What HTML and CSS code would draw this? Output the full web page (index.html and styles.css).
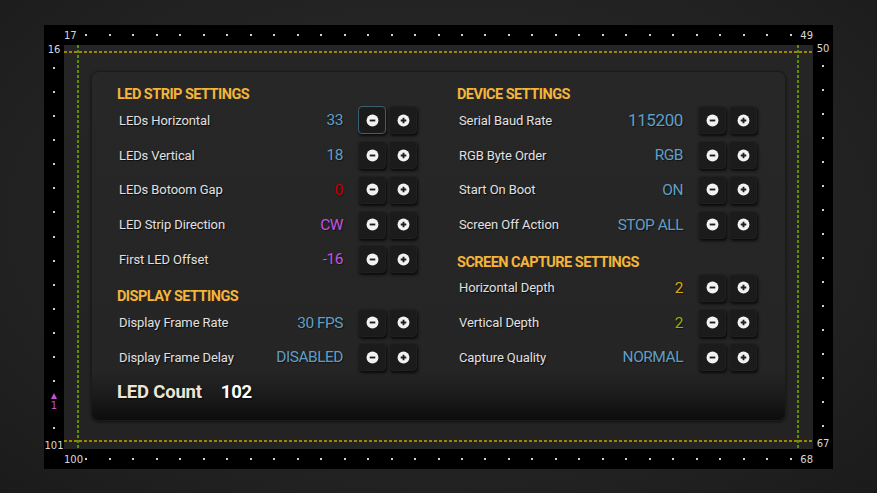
FILE: index.html
```html
<!DOCTYPE html>
<html>
<head>
<meta charset="utf-8">
<link rel="stylesheet" href="styles.css">
</head>
<body>
<div class="frame">
  <div class="corner"></div>
  <div class="strip strip-h strip-top">
    <span class="lab start">17</span>
    <i></i><i></i><i></i><i></i><i></i><i></i><i></i><i></i><i></i><i></i>
    <i></i><i></i><i></i><i></i><i></i><i></i><i></i><i></i><i></i><i></i>
    <i></i><i></i><i></i><i></i><i></i><i></i><i></i><i></i><i></i><i></i>
    <i></i>
    <span class="lab end">49</span>
  </div>
  <div class="corner"></div>

  <div class="strip strip-v strip-left">
    <span class="lab start">16</span>
    <i></i><i></i><i></i><i></i><i></i><i></i><i></i>
    <i></i><i></i><i></i><i></i><i></i><i></i><i></i>
    <span class="marker"><b class="tri"></b><span>1</span></span>
    <i></i>
    <span class="lab end">101</span>
  </div>

  <div class="canvas">
    <div class="guide guide-top"></div>
    <div class="guide guide-bottom"></div>
    <div class="guide guide-left"></div>
    <div class="guide guide-right"></div>
    <div class="panel">
      <div class="col">
        <h2 class="heading">LED STRIP SETTINGS</h2>
        <div class="row">
          <span class="label">LEDs Horizontal</span>
          <span class="value blue">33</span>
          <button class="btn focus"><svg viewBox="0 0 14 14"><circle cx="7" cy="7" r="6.4"/><path d="M4 7h6"/></svg></button>
          <button class="btn"><svg viewBox="0 0 14 14"><circle cx="7" cy="7" r="6.4"/><path d="M4 7h6M7 4v6"/></svg></button>
        </div>
        <div class="row">
          <span class="label">LEDs Vertical</span>
          <span class="value blue">18</span>
          <button class="btn"><svg viewBox="0 0 14 14"><circle cx="7" cy="7" r="6.4"/><path d="M4 7h6"/></svg></button>
          <button class="btn"><svg viewBox="0 0 14 14"><circle cx="7" cy="7" r="6.4"/><path d="M4 7h6M7 4v6"/></svg></button>
        </div>
        <div class="row">
          <span class="label">LEDs Botoom Gap</span>
          <span class="value red">0</span>
          <button class="btn"><svg viewBox="0 0 14 14"><circle cx="7" cy="7" r="6.4"/><path d="M4 7h6"/></svg></button>
          <button class="btn"><svg viewBox="0 0 14 14"><circle cx="7" cy="7" r="6.4"/><path d="M4 7h6M7 4v6"/></svg></button>
        </div>
        <div class="row">
          <span class="label">LED Strip Direction</span>
          <span class="value purple">CW</span>
          <button class="btn"><svg viewBox="0 0 14 14"><circle cx="7" cy="7" r="6.4"/><path d="M4 7h6"/></svg></button>
          <button class="btn"><svg viewBox="0 0 14 14"><circle cx="7" cy="7" r="6.4"/><path d="M4 7h6M7 4v6"/></svg></button>
        </div>
        <div class="row">
          <span class="label">First LED Offset</span>
          <span class="value purple">-16</span>
          <button class="btn"><svg viewBox="0 0 14 14"><circle cx="7" cy="7" r="6.4"/><path d="M4 7h6"/></svg></button>
          <button class="btn"><svg viewBox="0 0 14 14"><circle cx="7" cy="7" r="6.4"/><path d="M4 7h6M7 4v6"/></svg></button>
        </div>
        <h2 class="heading sub">DISPLAY SETTINGS</h2>
        <div class="row">
          <span class="label">Display Frame Rate</span>
          <span class="value blue">30 FPS</span>
          <button class="btn"><svg viewBox="0 0 14 14"><circle cx="7" cy="7" r="6.4"/><path d="M4 7h6"/></svg></button>
          <button class="btn"><svg viewBox="0 0 14 14"><circle cx="7" cy="7" r="6.4"/><path d="M4 7h6M7 4v6"/></svg></button>
        </div>
        <div class="row">
          <span class="label">Display Frame Delay</span>
          <span class="value blue">DISABLED</span>
          <button class="btn"><svg viewBox="0 0 14 14"><circle cx="7" cy="7" r="6.4"/><path d="M4 7h6"/></svg></button>
          <button class="btn"><svg viewBox="0 0 14 14"><circle cx="7" cy="7" r="6.4"/><path d="M4 7h6M7 4v6"/></svg></button>
        </div>
        <div class="count">
          <span class="count-label">LED Count</span>
          <span class="count-value">102</span>
        </div>
      </div>

      <div class="col">
        <h2 class="heading">DEVICE SETTINGS</h2>
        <div class="row">
          <span class="label">Serial Baud Rate</span>
          <span class="value blue big">115200</span>
          <button class="btn"><svg viewBox="0 0 14 14"><circle cx="7" cy="7" r="6.4"/><path d="M4 7h6"/></svg></button>
          <button class="btn"><svg viewBox="0 0 14 14"><circle cx="7" cy="7" r="6.4"/><path d="M4 7h6M7 4v6"/></svg></button>
        </div>
        <div class="row">
          <span class="label">RGB Byte Order</span>
          <span class="value blue">RGB</span>
          <button class="btn"><svg viewBox="0 0 14 14"><circle cx="7" cy="7" r="6.4"/><path d="M4 7h6"/></svg></button>
          <button class="btn"><svg viewBox="0 0 14 14"><circle cx="7" cy="7" r="6.4"/><path d="M4 7h6M7 4v6"/></svg></button>
        </div>
        <div class="row">
          <span class="label">Start On Boot</span>
          <span class="value blue">ON</span>
          <button class="btn"><svg viewBox="0 0 14 14"><circle cx="7" cy="7" r="6.4"/><path d="M4 7h6"/></svg></button>
          <button class="btn"><svg viewBox="0 0 14 14"><circle cx="7" cy="7" r="6.4"/><path d="M4 7h6M7 4v6"/></svg></button>
        </div>
        <div class="row">
          <span class="label">Screen Off Action</span>
          <span class="value blue">STOP ALL</span>
          <button class="btn"><svg viewBox="0 0 14 14"><circle cx="7" cy="7" r="6.4"/><path d="M4 7h6"/></svg></button>
          <button class="btn"><svg viewBox="0 0 14 14"><circle cx="7" cy="7" r="6.4"/><path d="M4 7h6M7 4v6"/></svg></button>
        </div>
        <h2 class="heading sub">SCREEN CAPTURE SETTINGS</h2>
        <div class="row">
          <span class="label">Horizontal Depth</span>
          <span class="value gold">2</span>
          <button class="btn"><svg viewBox="0 0 14 14"><circle cx="7" cy="7" r="6.4"/><path d="M4 7h6"/></svg></button>
          <button class="btn"><svg viewBox="0 0 14 14"><circle cx="7" cy="7" r="6.4"/><path d="M4 7h6M7 4v6"/></svg></button>
        </div>
        <div class="row">
          <span class="label">Vertical Depth</span>
          <span class="value lime">2</span>
          <button class="btn"><svg viewBox="0 0 14 14"><circle cx="7" cy="7" r="6.4"/><path d="M4 7h6"/></svg></button>
          <button class="btn"><svg viewBox="0 0 14 14"><circle cx="7" cy="7" r="6.4"/><path d="M4 7h6M7 4v6"/></svg></button>
        </div>
        <div class="row">
          <span class="label">Capture Quality</span>
          <span class="value blue">NORMAL</span>
          <button class="btn"><svg viewBox="0 0 14 14"><circle cx="7" cy="7" r="6.4"/><path d="M4 7h6"/></svg></button>
          <button class="btn"><svg viewBox="0 0 14 14"><circle cx="7" cy="7" r="6.4"/><path d="M4 7h6M7 4v6"/></svg></button>
        </div>
      </div>
    </div>
  </div>

  <div class="strip strip-v strip-right">
    <span class="lab start">50</span>
    <i></i><i></i><i></i><i></i><i></i><i></i><i></i><i></i>
    <i></i><i></i><i></i><i></i><i></i><i></i><i></i><i></i>
    <span class="lab end">67</span>
  </div>

  <div class="corner"></div>
  <div class="strip strip-h strip-bottom">
    <span class="lab start">100</span>
    <i></i><i></i><i></i><i></i><i></i><i></i><i></i><i></i><i></i><i></i>
    <i></i><i></i><i></i><i></i><i></i><i></i><i></i><i></i><i></i><i></i>
    <i></i><i></i><i></i><i></i><i></i><i></i><i></i><i></i><i></i><i></i>
    <i></i>
    <span class="lab end">68</span>
  </div>
  <div class="corner"></div>
</div>
</body>
</html>
```

FILE: styles.css
```css
html, body {
  margin: 0;
  padding: 0;
  height: 100%;
}
body {
  background: radial-gradient(ellipse at 50% 45%, #2a2a2a 0%, #242424 55%, #1b1b1b 100%);
  display: flex;
  justify-content: center;
  align-items: flex-start;
  padding-top: 25px;
  box-sizing: border-box;
  font-family: Roboto, "Noto Sans", sans-serif;
}
.frame {
  width: 789px;
  height: 444px;
  background: #000;
  display: grid;
  grid-template-columns: 20px 749px 20px;
  grid-template-rows: 20px 404px 20px;
}
.strip {
  display: flex;
  justify-content: space-between;
  font-family: "DejaVu Sans", sans-serif;
  font-size: 10px;
  color: #d8d8d8;
}
.strip i {
  display: block;
  width: 2px;
  height: 2px;
  background: #d0d0d0;
}
.strip-h {
  align-items: center;
}
.strip-h .lab {
  width: 0;
  display: flex;
  white-space: nowrap;
  line-height: 10px;
  position: relative;
  top: 1px;
}
.strip-h .lab.end {
  justify-content: flex-end;
}
.strip-top {
  margin-top: -1px;
}
.strip-bottom {
  padding-left: 5px;
}
.strip-bottom .lab.start {
  margin-left: -5px;
}
.strip-v {
  flex-direction: column;
  align-items: center;
  margin: -1.5px 0 2px;
}
.strip-v .lab {
  height: 0;
  display: flex;
  flex-direction: column;
  line-height: 10px;
  white-space: nowrap;
}
.strip-v .lab.end {
  justify-content: flex-end;
}
.strip-left .lab.start { margin-top: 1px; }
.strip-left .lab.end { margin-bottom: -4px; }
.strip-right .lab.start { margin-top: 0; }
.strip-right .lab.end { margin-bottom: -2px; }
.marker {
  height: 0;
  display: flex;
  flex-direction: column;
  align-items: center;
  justify-content: center;
  color: #c24fe0;
  line-height: 10px;
}
.tri {
  display: block;
  width: 0;
  height: 0;
  border-left: 3.5px solid transparent;
  border-right: 3.5px solid transparent;
  border-bottom: 6px solid #c24fe0;
  margin-bottom: 2px;
  margin-top: -5px;
}
.canvas {
  position: relative;
  background: linear-gradient(180deg, #252525 0%, #232323 100%);
  padding: 26px 27px 0;
}
.guide {
  position: absolute;
}
.guide-top, .guide-bottom {
  left: 0;
  right: 0;
  height: 2px;
  background: repeating-linear-gradient(90deg, #9c8500 0 3px, transparent 3px 5px);
}
.guide-top { top: 6px; }
.guide-bottom { top: 395px; }
.guide-left, .guide-right {
  top: 0;
  bottom: 0;
  width: 2px;
  background: repeating-linear-gradient(180deg, #5f8c00 0 3px, transparent 3px 5px);
}
.guide-left { left: 13px; }
.guide-right { right: 14px; }
.panel {
  position: relative;
  height: 350px;
  box-sizing: border-box;
  border-radius: 8px;
  border: 1px solid #1b1b1b;
  background: linear-gradient(180deg, #272727 0%, #252525 86%, #1b1b1b 93%, #0c0c0c 100%);
  box-shadow: 0 1px 3px rgba(0,0,0,0.6);
  padding: 14px 28px 0 25px;
  display: grid;
  grid-template-columns: 300px 300px;
  column-gap: 40px;
  align-content: start;
}
.col {
  display: flex;
  flex-direction: column;
}
.heading {
  margin: 0;
  height: 17px;
  line-height: 17px;
  font-size: 14.5px;
  font-weight: 700;
  color: #f4b53a;
  letter-spacing: -0.55px;
}
.heading.sub {
  margin-top: 11.5px;
}
.row {
  height: 34.75px;
  display: flex;
  align-items: center;
}
.label {
  flex: 1;
  padding-left: 2px;
  font-size: 13px;
  letter-spacing: -0.1px;
  color: #e0e0e0;
  text-shadow: 1px 1px 1px rgba(0,0,0,0.7);
}
.value {
  font-size: 15.5px;
  letter-spacing: -0.5px;
  margin-right: 15px;
  text-shadow: 1px 1px 1px rgba(0,0,0,0.5);
}
.value.big { font-size: 17px; letter-spacing: -0.4px; }
.blue { color: #5f9fc6; }
.red { color: #c80000; }
.purple { color: #c452e6; }
.gold { color: #d8aa10; }
.lime { color: #90b400; }
.btn {
  width: 28px;
  height: 28px;
  padding: 0;
  margin: 0 0 0 3px;
  border: 1px solid #202020;
  border-radius: 4px;
  background: #1b1b1b;
  box-shadow: 1px 2px 3px rgba(0,0,0,0.75);
  display: flex;
  align-items: center;
  justify-content: center;
}
.value + .btn {
  margin-left: 0;
}
.btn.focus {
  border: 1.5px solid #3d6172;
}
.btn svg {
  width: 13px;
  height: 13px;
  display: block;
}
.btn circle {
  fill: #f2f2f2;
}
.btn path {
  stroke: #1c1c1c;
  stroke-width: 2;
  fill: none;
}
.count {
  margin-top: 5.5px;
  height: 24px;
  display: flex;
  align-items: center;
  font-size: 18.5px;
  letter-spacing: -0.2px;
  font-weight: 700;
  text-shadow: 1px 1px 2px rgba(0,0,0,0.7);
}
.count-label {
  color: #eee4d4;
  margin-right: 19px;
}
.count-value {
  color: #ffffff;
}
```
